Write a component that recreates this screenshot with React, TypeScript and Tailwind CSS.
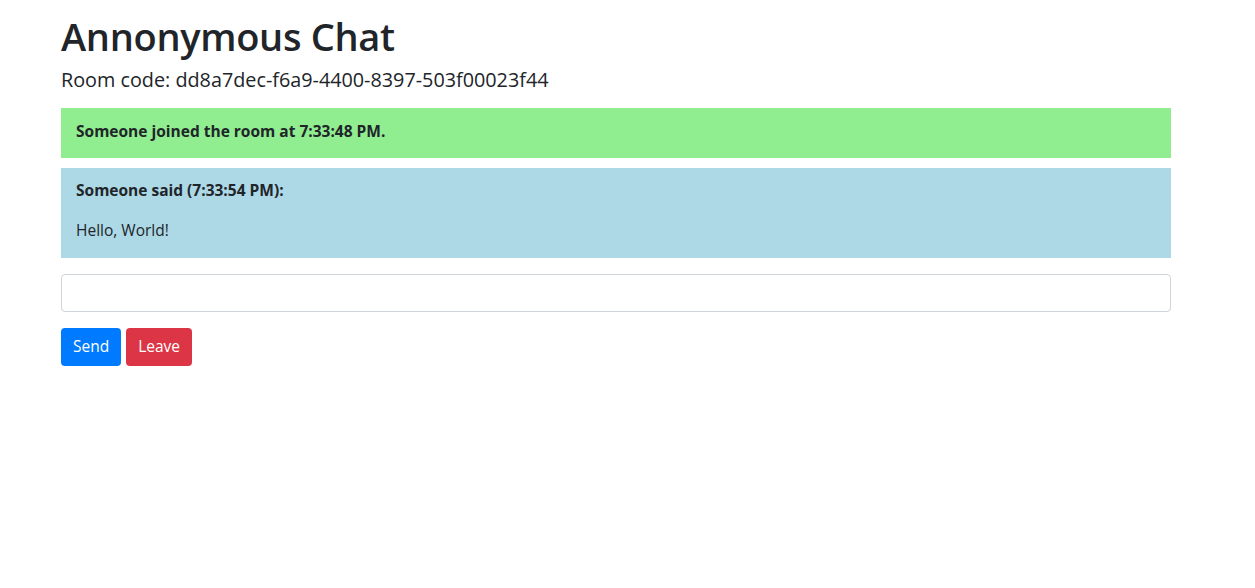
import React from 'react'

const App = () => {
  return (
    <div className="min-h-[588px] bg-white text-[#212529] font-['Open_Sans',sans-serif]">
      <div className="w-[1110px] ml-[61px] pt-[12px]">
        <h1 className="text-[38px] leading-[48px] font-semibold mb-[8px] tracking-[-0.3px]">Annonymous Chat</h1>
        <h5 className="text-[19.8px] leading-[24px] font-medium mb-[16px]">Room code: dd8a7dec-f6a9-4400-8397-503f00023f44</h5>
        <div className="flex flex-col gap-[10px]">
          <div className="bg-[#90ee90] px-[15px] pt-[11px] pb-[15px] text-[15.5px] leading-[24px]">
            <p className="font-bold">Someone joined the room at 7:33:48 PM.</p>
          </div>
          <div className="bg-[#add8e6] px-[15px] pt-[10px] pb-[16px] text-[15.5px] leading-[24px] flex flex-col gap-[16px]">
            <p className="font-bold">Someone said (7:33:54 PM):</p>
            <p>Hello, World!</p>
          </div>
        </div>
        <input type="text" className="mt-[16px] block w-full h-[38px] border border-[#ced4da] rounded-[4px] px-3 outline-none" />
        <div className="flex gap-[5px] mt-[16px]">
          <button className="h-[38px] px-[12px] rounded-[4px] bg-[#007bff] text-white text-[15.5px] leading-[24px] pb-[2px]">Send</button>
          <button className="h-[38px] px-[12px] rounded-[4px] bg-[#dc3545] text-white text-[15.5px] leading-[24px] pb-[2px]">Leave</button>
        </div>
      </div>
    </div>
  )
}

export default App
